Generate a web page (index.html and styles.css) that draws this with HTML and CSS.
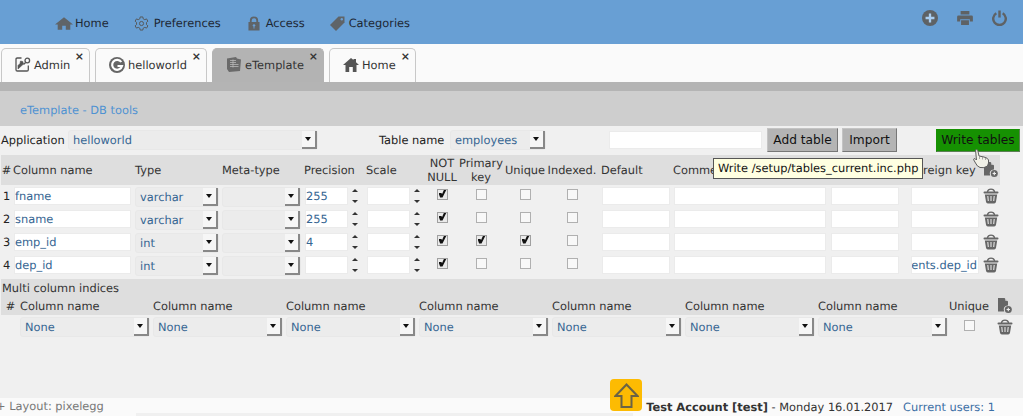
FILE: index.html
```html
<!DOCTYPE html>
<html lang="en">
<head>
<meta charset="utf-8">
<title>eTemplate - DB tools</title>
<link rel="stylesheet" href="styles.css">
</head>
<body>
<svg class="defs" width="0" height="0">
  <symbol id="trash" viewBox="0 0 16 16"><path d="M1.500 3.500 H3.800 Q4.500 .5 8 .5 Q11.500 .5 12.200 3.500 H14.500 A1 1 0 0 1 14.500 5.500 H1.500 A1 1 0 0 1 1.500 3.500Z M5.200 3.500 H10.800 Q10.200 1.700 8 1.700 Q5.800 1.700 5.200 3.500Z M1.800 6.500 H14.200 L13 13.800 Q12.700 15.500 11.200 15.500 H4.800 Q3.300 15.500 3 13.800 Z" fill="#666" fill-rule="evenodd"/><path d="M4.800 8 L5.300 13 M8 8 V13 M11.200 8 L10.700 13" stroke="#e6e6e6" stroke-width="1.100"/></symbol>
  <symbol id="addfile" viewBox="0 0 14 16"><path d="M0 0 H6.500 L10 3.500 V7.500 A4 4 0 0 0 6.200 13.500 H0Z" fill="#666"/><path d="M7.300 .3 L9.800 2.800 H7.300Z" fill="#ddd"/><circle cx="10.300" cy="11.500" r="3.500" fill="#666"/><path d="M8.600 11.500 H12 M10.300 9.800 V13.200" stroke="#eee" stroke-width="1.100"/></symbol>
</svg>

<header class="topbar">
  <nav class="mainnav">
    <a class="navitem nav-home">
      <svg width="18" height="13" viewBox="0 0 20 14"><path d="M10 0 L20 8 H17 V14 H12 V9.500 H8 V14 H3 V8 H0Z" fill="#5f6468"/></svg>Home</a>
    <a class="navitem nav-pref">
      <svg width="15" height="15" viewBox="0 0 16 16" fill="none" stroke="#555" stroke-width="1"><path d="M6.600 1 H9.400 L9.800 3 L11.500 3.900 L13.400 3.100 L14.800 5.500 L13.300 6.900 V9.100 L14.800 10.500 L13.400 12.900 L11.500 12.100 L9.800 13 L9.400 15 H6.600 L6.200 13 L4.500 12.100 L2.600 12.900 L1.200 10.500 L2.700 9.100 V6.900 L1.200 5.500 L2.600 3.100 L4.500 3.900 L6.200 3Z"/><circle cx="8" cy="8" r="2.200"/></svg>Preferences</a>
    <a class="navitem nav-access">
      <svg width="12" height="15" viewBox="0 0 13 15"><path d="M2 6 V4.200 A4.500 4.200 0 0 1 11 4.200 V6 H12.500 V15 H.5 V6Z M4 6 H9 V4.200 A2.500 2.400 0 0 0 4 4.200Z" fill="#5f6468" fill-rule="evenodd"/><circle cx="6.500" cy="9.500" r="1.300" fill="#6a9fd4"/><rect x="6" y="10" width="1" height="3" fill="#6a9fd4"/></svg>Access</a>
    <a class="navitem nav-cat">
      <svg width="15" height="15" viewBox="0 0 15 15"><path d="M8.500 .5 H14.500 V6.500 L6 15 L0 9Z" fill="#5f6468"/><circle cx="11.800" cy="3.200" r="1.200" fill="#6a9fd4"/></svg>Categories</a>
  </nav>
  <div class="topicons">
    <svg width="16" height="16" viewBox="0 0 18 18"><circle cx="9" cy="9" r="9" fill="#5e6265"/><path d="M9 4 V14 M4 9 H14" stroke="#a9cdf0" stroke-width="2.600"/></svg>
    <svg width="16" height="14" viewBox="0 0 18 16"><path d="M4 0 H14 V4 H4Z M1.500 5 H16.500 Q18 5 18 6.500 V12 H14.500 V9.500 H3.500 V12 H0 V6.500 Q0 5 1.500 5Z M4.500 10.500 H13.500 V16 H4.500Z" fill="#5e6265"/></svg>
    <svg width="15" height="16" viewBox="0 0 16 17" fill="none" stroke="#5e6265" stroke-width="2.600"><path d="M4.600 3.500 A6.700 6.700 0 1 0 11.400 3.500"/><path d="M8 0.500 V8"/></svg>
  </div>
</header>

<div class="tabstrip">
  <div class="tab tab-admin">
    <svg width="16" height="15" viewBox="0 0 16 15" fill="none" stroke="#555" stroke-width="1.300"><path d="M6.500 1 H2.300 Q1 1 1 2.300 V12.700 Q1 14 2.300 14 H12 Q13.300 14 13.300 12.700 V8.500"/><circle cx="12.300" cy="3.500" r="2.300"/><path d="M10.600 5.500 L8.500 7.500"/><path d="M3 12 L8.500 7 L7.800 4.500 L5.500 4 L5 6.500 L3 8.500Z" fill="#555" stroke-width=".6"/></svg>
    <span>Admin</span><i class="close">×</i></div>
  <div class="tab tab-hello">
    <svg width="16" height="16" viewBox="0 0 16 16"><circle cx="8" cy="8" r="8" fill="#666"/><path d="M12.300 5 A5 5 0 1 0 13 9 H8.500" fill="none" stroke="#fff" stroke-width="2.200"/></svg>
    <span>helloworld</span><i class="close">×</i></div>
  <div class="tab tab-active tab-etpl">
    <svg width="16" height="15" viewBox="0 0 16 15"><path d="M1 1.500 L10 0 L11 1.500 L15 2.500 L14 14 L3 15 L1 12Z" fill="#6a6a6a"/><path d="M4 3.500 H10 M4 5.500 H10 M4 7.500 H12.500 M4 9.500 H12.500 M7 2.500 V10.500" stroke="#b8b8b8" stroke-width=".8"/></svg>
    <span>eTemplate</span><i class="close">×</i></div>
  <div class="tab tab-home">
    <svg width="16" height="14" viewBox="0 0 16 14"><path d="M8 0 L10.500 2 V1 H13 V4.200 L16 7 H13.500 V14 H9.800 V9 H6.200 V14 H2.500 V7 H0Z" fill="#555"/></svg>
    <span>Home</span><i class="close">×</i></div>
</div>
<div class="graybar"></div>
<div class="titlebar">eTemplate - DB tools</div>

<main class="content">
  <div class="toolbar">
    <label class="lbl-app">Application</label>
    <div class="sel sel-app"><span>helloworld</span><b class="arrow"></b></div>
    <label class="lbl-table">Table name</label>
    <div class="sel sel-table"><span>employees</span><b class="arrow"></b></div>
    <div class="inp inp-new"></div>
    <button class="btn btn-add">Add table</button>
    <button class="btn btn-import">Import</button>
    <button class="btn btn-write">Write tables</button>
  </div>

  <section class="columns">
    <div class="row head">
      <div class="h-num">#</div><div class="h-name">Column name</div><div>Type</div><div>Meta-type</div>
      <div>Precision</div><div>Scale</div><div class="ctr">NOT<br>NULL</div><div class="ctr">Primary<br>key</div>
      <div class="ctr">Unique</div><div class="ctr c-idx">Indexed.</div><div class="h-tight">Default</div><div class="h-tight">Comment</div><div></div>
      <div class="h-fk">Foreign key</div><div class="ico"><svg width="14" height="16"><use href="#addfile"/></svg></div>
    </div>

    <div class="row">
      <div class="num">1</div><div class="inp txt">fname</div>
      <div class="sel"><span>varchar</span><b class="arrow"></b></div><div class="sel"><span></span><b class="arrow"></b></div>
      <div class="num-inp"><div class="inp txt">255</div><div class="spin"><i class="up"></i><i class="dn"></i></div></div>
      <div class="num-inp"><div class="inp"></div><div class="spin"><i class="up"></i><i class="dn"></i></div></div>
      <div class="ctr"><span class="cb on"></span></div><div class="ctr"><span class="cb"></span></div><div class="ctr"><span class="cb"></span></div><div class="ctr c-idx"><span class="cb"></span></div>
      <div class="inp"></div><div class="inp"></div><div class="inp i-len"></div><div class="inp i-fk"></div>
      <div class="ico"><svg width="16" height="16"><use href="#trash"/></svg></div>
    </div>
    <div class="row">
      <div class="num">2</div><div class="inp txt">sname</div>
      <div class="sel"><span>varchar</span><b class="arrow"></b></div><div class="sel"><span></span><b class="arrow"></b></div>
      <div class="num-inp"><div class="inp txt">255</div><div class="spin"><i class="up"></i><i class="dn"></i></div></div>
      <div class="num-inp"><div class="inp"></div><div class="spin"><i class="up"></i><i class="dn"></i></div></div>
      <div class="ctr"><span class="cb on"></span></div><div class="ctr"><span class="cb"></span></div><div class="ctr"><span class="cb"></span></div><div class="ctr c-idx"><span class="cb"></span></div>
      <div class="inp"></div><div class="inp"></div><div class="inp i-len"></div><div class="inp i-fk"></div>
      <div class="ico"><svg width="16" height="16"><use href="#trash"/></svg></div>
    </div>
    <div class="row">
      <div class="num">3</div><div class="inp txt">emp_id</div>
      <div class="sel"><span>int</span><b class="arrow"></b></div><div class="sel"><span></span><b class="arrow"></b></div>
      <div class="num-inp"><div class="inp txt">4</div><div class="spin"><i class="up"></i><i class="dn"></i></div></div>
      <div class="num-inp"><div class="inp"></div><div class="spin"><i class="up"></i><i class="dn"></i></div></div>
      <div class="ctr"><span class="cb on"></span></div><div class="ctr"><span class="cb on"></span></div><div class="ctr"><span class="cb on"></span></div><div class="ctr c-idx"><span class="cb"></span></div>
      <div class="inp"></div><div class="inp"></div><div class="inp i-len"></div><div class="inp i-fk"></div>
      <div class="ico"><svg width="16" height="16"><use href="#trash"/></svg></div>
    </div>
    <div class="row">
      <div class="num">4</div><div class="inp txt">dep_id</div>
      <div class="sel"><span>int</span><b class="arrow"></b></div><div class="sel"><span></span><b class="arrow"></b></div>
      <div class="num-inp"><div class="inp"></div><div class="spin"><i class="up"></i><i class="dn"></i></div></div>
      <div class="num-inp"><div class="inp"></div><div class="spin"><i class="up"></i><i class="dn"></i></div></div>
      <div class="ctr"><span class="cb on"></span></div><div class="ctr"><span class="cb"></span></div><div class="ctr"><span class="cb"></span></div><div class="ctr c-idx"><span class="cb"></span></div>
      <div class="inp"></div><div class="inp"></div><div class="inp i-len"></div><div class="inp i-fk clip-r"><span>departments.dep_id</span></div>
      <div class="ico"><svg width="16" height="16"><use href="#trash"/></svg></div>
    </div>
  </section>

  <section class="indices">
    <div class="multi-title">Multi column indices</div>
    <div class="mrow mhead">
      <div class="ctr">#</div><div>Column name</div><div>Column name</div><div>Column name</div><div>Column name</div><div>Column name</div><div>Column name</div><div>Column name</div>
      <div class="ctr">Unique</div><div class="ico"><svg width="14" height="16"><use href="#addfile"/></svg></div>
    </div>
    <div class="mrow mbody">
      <div></div>
      <div class="sel"><span>None</span><b class="arrow"></b></div><div class="sel"><span>None</span><b class="arrow"></b></div><div class="sel"><span>None</span><b class="arrow"></b></div><div class="sel"><span>None</span><b class="arrow"></b></div><div class="sel"><span>None</span><b class="arrow"></b></div><div class="sel"><span>None</span><b class="arrow"></b></div><div class="sel"><span>None</span><b class="arrow"></b></div>
      <div class="ctr m-cb"><span class="cb"></span></div><div class="ico"><svg width="16" height="16"><use href="#trash"/></svg></div>
    </div>
  </section>

  <div class="tooltip">Write /setup/tables_current.inc.php</div>
  <svg class="hand" width="20" height="20" viewBox="0 0 20 20"><path d="M4.500 1 Q6 0 6.800 1.500 L8 7 L13 8 Q17 9 17.500 11 Q18 14 16.500 17 Q13 19.500 9 18.500 Q6 17.500 4.500 14 L2.500 10.500 Q2.500 9 4.500 10 L5.500 11 Z" fill="#f1f1e8" stroke="#5f5f5f" stroke-width="1"/><path d="M8.500 7 V10 M11.500 8 V10.500 M14.500 9 V11" stroke="#8a8a8a" stroke-width=".7" fill="none"/></svg>
</main>

<footer class="footer">
  <div class="layout">+ Layout: pixelegg</div>
  <div class="userinfo"><b>Test Account [test]</b> - Monday 16.01.2017<a>Current users: 1</a></div>
  <div class="uparrow"><svg width="25" height="25" viewBox="0 0 25 25"><path d="M12.500 1.500 L23.500 13 H17.500 V24 H7.500 V13 H1.500Z" fill="none" stroke="#6b6345" stroke-width="2"/></svg></div>
  <div class="footline"></div>
</footer>
</body>
</html>
```
FILE: styles.css
```css
* { box-sizing: border-box; }
html, body { margin: 0; padding: 0; height: 416px; overflow: hidden; }
body { font-family: "DejaVu Sans", sans-serif; font-size: 11.4px; color: #222; background: #f0f0f0; text-rendering: geometricPrecision; }
.defs { position: absolute; }

.topbar { height: 44px; background: #689fd4; display: flex; justify-content: space-between; align-items: flex-start; padding: 15px 16px 0 55px; }
.mainnav { display: flex; align-items: center; height: 16px; color: #1d2733; }
.navitem { display: flex; align-items: center; }
.nav-home svg { margin-right: 2px; }
.nav-pref { margin-left: 25px; }
.nav-pref svg { margin-right: 5px; }
.nav-access { margin-left: 27px; }
.nav-access svg { margin-right: 6px; }
.nav-cat { margin-left: 25px; }
.nav-cat svg { margin-right: 4px; }
.topicons { display: flex; gap: 19px; align-items: center; margin-top: -5px; }

.tabstrip { height: 38px; background: #fafafa; display: flex; padding: 4px 0 0 1px; gap: 5px; align-items: stretch; }
.tab { position: relative; display: flex; align-items: center; gap: 3px; height: 34px; padding: 0 0 2px 13px; border: 1px solid #c8c8c8; border-bottom: none; border-radius: 5px 5px 0 0; background: #fafafa; color: #333; }
.tab-admin { width: 89px; }
.tab-hello { width: 112px; }
.tab-etpl { width: 112px; }
.tab-home { width: 87px; }
.tab-active { background: #b3b3b3; border-color: #b3b3b3; }
.close { position: absolute; top: 1px; right: 5px; font-style: normal; font-size: 11px; line-height: 14px; color: #333; font-weight: bold; }

.graybar { height: 9px; background: #b4b4b4; }
.titlebar { height: 35px; background: #cecece; color: #4e92d2; padding: 12px 0 0 20px; line-height: 14px; }

.content { position: relative; height: 272px; background: #f0f0f0; padding-top: 2px; }

.toolbar { height: 24px; display: flex; align-items: center; }
.lbl-app { margin-left: 1px; width: 67px; }
.sel-app { width: 250px; }
.lbl-table { margin-left: 61px; width: 71px; }
.sel-table { width: 96px; }
.inp-new { width: 153px; margin-left: 63px; }
.btn { font: inherit; font-size: 12.200px; height: 24px; padding: 0; color: #111; background: #b4b4b4; border: 1px solid #c4c4c4; border-right-color: #777; border-bottom-color: #777; }
.btn-add { width: 71px; margin-left: 5px; }
.btn-import { width: 55px; margin-left: 4px; }
.btn-write { width: 84px; height: 23px; margin-left: 39px; background: #169102; border-color: #169102 #5c7f55 #5c7f55 #169102; }

.inp { background: #fff; border: 1px solid #ebebeb; height: 18px; line-height: 16px; color: #356592; padding: 0; overflow: hidden; white-space: nowrap; }
.sel { display: flex; align-items: center; justify-content: space-between; height: 20px; background: #ececec; border: 1px solid #e8e8e8; border-radius: 3px; color: #356592; padding-left: 4px; }
.arrow { position: relative; width: 15px; height: 18px; background: #f6f6f6; border-right: 2px solid #888; border-bottom: 2px solid #888; flex: none; }
.arrow::after { content: ""; position: absolute; left: 3px; top: 6px; border: 3.500px solid transparent; border-top: 4px solid #111; border-bottom: none; }

.columns { margin-top: 3px; margin-left: 1px; width: 999px; }
.row { display: grid; grid-template-columns: 11px 121px 87px 82px 62px 60px 36px 42px 46px 52px 72px 156px 75px 78px 20px; height: 23px; align-items: start; }
.row > .inp { width: calc(100% - 4px); margin-left: 2px; }
.row > .sel { width: calc(100% - 3px); margin-left: 2px; }
.head { height: 30px; background: #dedede; align-items: center; margin-bottom: 2px; line-height: 14px; color: #333; white-space: nowrap; }
.head > div { padding-left: 2px; }
.head > .h-num, .head > .ctr, .head > .ico { padding-left: 0; }
.head > .h-name { padding-left: 1px; }
.head > .h-tight { padding-left: 1px; }
.head > .h-fk { padding-left: 7px; }
.h-num { text-align: center; }
.ctr { display: flex; justify-content: center; align-items: center; text-align: center; }
.c-idx { padding-right: 4px; }
.num { text-align: center; line-height: 18px; }
.num-inp { display: flex; margin-left: 3px; }
.num-inp .inp { width: 43px; flex: none; }
.spin { width: 14px; height: 18px; position: relative; flex: none; background: #f0f0f0; }
.spin i { position: absolute; left: 4px; border: 3px solid transparent; }
.spin .up { top: 2px; border-bottom: 3px solid #333; border-top: none; }
.spin .dn { top: 13px; border-top: 3px solid #333; border-bottom: none; }
.cb { display: block; position: relative; width: 11px; height: 11px; background: #f8f8f8; border: 1px solid #b0b0b0; }
.cb.on { background: #eaeaea; border-color: #a0a0a0; }
.row .ctr { height: 14px; }
.head .ctr { height: auto; }
.cb.on::after { content: ""; position: absolute; left: 1px; top: 0; width: 8px; height: 8px; background: #111; clip-path: polygon(0 45%, 35% 45%, 45% 55%, 70% 0, 100% 0, 50% 100%, 20% 100%); }
.ico { display: flex; justify-content: center; align-items: center; height: 17px; }
.row > .i-len { width: 68px; margin-left: 3px; }
.row > .i-fk { width: 68px; margin-left: 8px; }
.clip-r { display: flex; justify-content: flex-end; padding-right: 1px; }
.clip-r span { flex: none; }

.indices { margin-top: 0; }
.multi-title { height: 18px; background: #dedede; margin-left: 1px; padding: 2px 0 0 1px; line-height: 14px; color: #333; }
.mrow { display: grid; grid-template-columns: 19px repeat(7, 133px) 36px 36px; margin-left: 1px; }
.mhead { height: 18px; background: #dedede; line-height: 14px; align-items: center; color: #333; white-space: nowrap; }
.mbody { margin-top: 2px; align-items: center; }
.mbody .sel { width: 130px; }
.m-cb { margin-top: -3px; }

.tooltip { position: absolute; left: 713px; top: 32px; width: 210px; height: 21px; padding-left: 4px; line-height: 18px; background: #ffffe1; border: 1px solid #555; color: #111; white-space: nowrap; }
.hand { position: absolute; left: 971px; top: 23px; }

.footer { position: relative; height: 18px; background: #fafafa; color: #333; display: flex; justify-content: space-between; line-height: 15px; }
.layout { color: #777; margin-left: -4px; padding-top: 1px; }
.userinfo { padding-right: 28px; padding-top: 2px; }
.userinfo a { color: #3a6ea5; margin-left: 10px; }
.uparrow { position: absolute; left: 610px; top: -19px; width: 32px; height: 32px; background: #fdbb02; border-radius: 4px; display: flex; align-items: center; justify-content: center; }
.footline { position: absolute; left: 136px; width: 497px; bottom: 0; height: 3px; background: #f0f0f0; }
```
